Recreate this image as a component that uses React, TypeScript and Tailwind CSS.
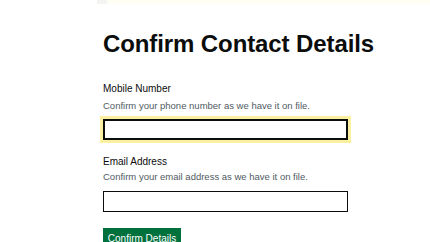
export default function App() {
  return (
    <div className="w-[430px] h-[242px] overflow-hidden bg-white font-['Liberation_Sans',Arial,sans-serif] text-[#0b0c0c]">
      <div className="flex h-[4px]">
        <div className="w-[97px]" />
        <div className="w-[10px] bg-[#f4f4f2]" />
        <div className="flex-1 bg-[#fffef3]" />
      </div>
      <div className="pl-[103px]">
        <h1 className="mt-[26px] text-[24px] leading-[28px] font-bold tracking-[-0.1px] whitespace-nowrap">Confirm Contact Details</h1>

        <div className="mt-[24px] text-[10px] leading-[13px]">Mobile Number</div>
        <div className="mt-[5px] text-[9.5px] leading-[12px] text-[#505a5f]">Confirm your phone number as we have it on file.</div>
        <div className="mt-[7px] w-[245px] h-[21px] border-2 border-[#0b0c0c] bg-white shadow-[0_0_0_3px_#fbf0a0]" />

        <div className="mt-[15px] text-[10px] leading-[13px]">Email Address</div>
        <div className="mt-[3px] text-[9.5px] leading-[12px] text-[#505a5f]">Confirm your email address as we have it on file.</div>
        <div className="mt-[8px] w-[245px] h-[21px] border-[1.5px] border-[#0b0c0c] bg-white" />

        <button className="mt-[16px] h-[22px] w-[78px] bg-[#00703c] text-white text-[10px] leading-[13px] pt-[4px] flex justify-center items-start">
          Confirm Details
        </button>
      </div>
    </div>
  )
}
